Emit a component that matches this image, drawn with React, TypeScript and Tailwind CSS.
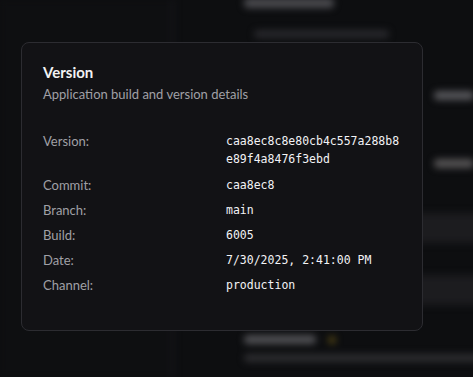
import React from "react";

const rows: { label: string; value: string[] }[] = [
  { label: "Version:", value: ["caa8ec8c8e80cb4c557a288b8", "e89f4a8476f3ebd"] },
  { label: "Commit:", value: ["caa8ec8"] },
  { label: "Branch:", value: ["main"] },
  { label: "Build:", value: ["6005"] },
  { label: "Date:", value: ["7/30/2025, 2:41:00 PM"] },
  { label: "Channel:", value: ["production"] },
];

export default function App() {
  return (
    <div
      className="relative w-[473px] h-[377px] overflow-hidden bg-[#0d0e10]"
      style={{ fontFamily: 'Lato, "Noto Sans", sans-serif' }}
    >
      {/* blurred page behind */}
      <div className="flex h-full blur-[3.5px]">
        <div className="w-[174px] shrink-0 border-r-[3px] border-[#16161a] bg-[#0e0f11]" />
        <div className="flex-1 flex flex-col pl-[70px] pt-0">
          <div className="h-[10px] w-[90px] mt-[-2px] bg-[#4a4a4e] rounded-sm" />
          <div className="h-[8px] w-[135px] mt-[22px] ml-[10px] bg-[#28282c] rounded-sm" />
          <div className="flex justify-end mt-[53px]">
            <div className="h-[9px] w-[40px] bg-[#56565a] rounded-sm mr-[10px]" />
          </div>
          <div className="flex justify-end mt-[59px]">
            <div className="h-[9px] w-[40px] bg-[#555354] rounded-sm mr-[10px]" />
          </div>
          <div className="h-[30px] mt-[45px] bg-[#1c1c1f]" />
          <div className="h-[30px] mt-[32px] bg-[#1c1c1f]" />
          <div className="flex items-center gap-[12px] mt-[30px]">
            <div className="h-[9px] w-[72px] bg-[#505054] rounded-sm" />
            <div className="h-[8px] w-[8px] bg-[#4f4214] rounded-full" />
          </div>
          <div className="h-[8px] w-[240px] mt-[10px] bg-[#2d2d30] rounded-sm" />
        </div>
      </div>

      {/* dialog */}
      <div className="absolute left-[21px] top-[42px] w-[402px] h-[289px] rounded-[8px] border border-[#2c2c31] bg-[#121215] px-[21px] pt-[18px]">
        <h2 className="text-[15px] leading-[22px] font-bold text-[#f2f2f3]">Version</h2>
        <p className="text-[13px] leading-[20px] text-[#a0a0a6] mt-[1px]">
          Application build and version details
        </p>
        <div className="mt-[28px] flex flex-col gap-[7px]">
          {rows.map((r, i) => (
            <div
              key={r.label}
              className={i === 0 ? "grid grid-cols-2 gap-x-2 items-start pb-[1px]" : "grid grid-cols-2 gap-x-2 items-start"}
            >
              <div className="text-[13px] leading-[18px] text-[#a0a0a6]">{r.label}</div>
              <div
                className="text-[11.5px] leading-[18px] font-normal text-[#f3f3f5]"
                style={{ fontFamily: '"DejaVu Sans Mono", monospace' }}
              >
                {r.value.map((v) => (
                  <div key={v}>{v}</div>
                ))}
              </div>
            </div>
          ))}
        </div>
      </div>
    </div>
  );
}
